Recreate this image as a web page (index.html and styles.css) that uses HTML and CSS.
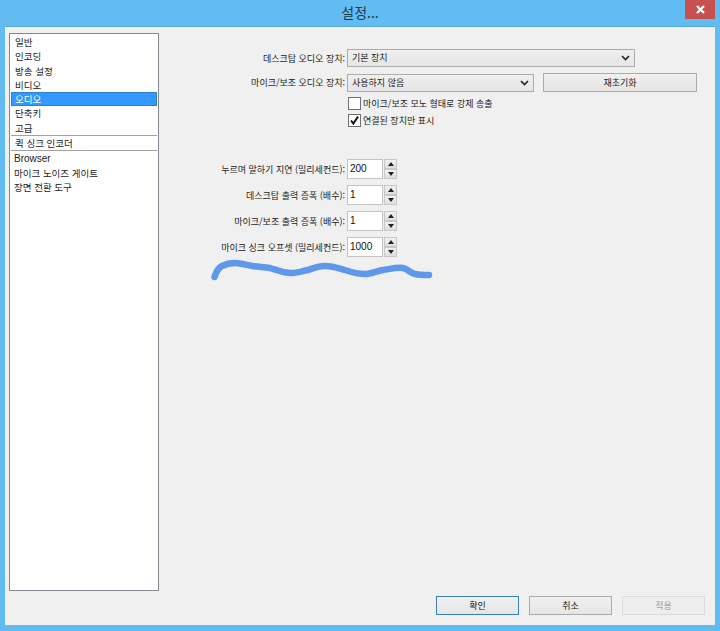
FILE: index.html
```html
<!DOCTYPE html>
<html lang="ko">
<head>
<meta charset="utf-8">
<title>설정...</title>
<link rel="stylesheet" href="styles.css">
</head>
<body>
<div class="window">
  <header class="titlebar">
    <span class="title">설정...</span>
    <span class="close"><svg width="9" height="9" viewBox="0 0 9 9"><path d="M1 1l7 7M8 1l-7 7" stroke="#fff" stroke-width="2.2" fill="none"/></svg></span>
  </header>
  <div class="client">
    <nav class="list">
      <div class="item">일반</div>
      <div class="item">인코딩</div>
      <div class="item">방송 설정</div>
      <div class="item">비디오</div>
      <div class="item selected">오디오</div>
      <div class="item">단축키</div>
      <div class="item">고급</div>
      <div class="item divided">퀵 싱크 인코더</div>
      <div class="item plugin first">Browser</div>
      <div class="item plugin">마이크 노이즈 게이트</div>
      <div class="item plugin">장면 전환 도구</div>
    </nav>
    <div class="pane">
      <section class="devices">
        <label class="label">데스크탑 오디오 장치:</label>
        <div class="select wide"><span>기본 장치</span><svg class="chev" width="9" height="6" viewBox="0 0 9 6"><path d="M1 1l3.5 3.5L8 1" stroke="#222" stroke-width="1.6" fill="none"/></svg></div>
        <label class="label">마이크/보조 오디오 장치:</label>
        <div class="inline">
          <div class="select narrow"><span>사용하지 않음</span><svg class="chev" width="9" height="6" viewBox="0 0 9 6"><path d="M1 1l3.5 3.5L8 1" stroke="#222" stroke-width="1.6" fill="none"/></svg></div>
          <div class="button reset">재초기화</div>
        </div>
        <span></span>
        <div class="checks">
          <div class="check"><span class="box"></span>마이크/보조 모노 형태로 강제 송출</div>
          <div class="check"><span class="box"><svg width="11" height="11" viewBox="0 0 11 11"><path d="M2 5.5l2.4 3L9 1.5" stroke="#111" stroke-width="2" fill="none"/></svg></span>연결된 장치만 표시</div>
        </div>
      </section>
      <section class="spins">
        <label class="label">누르며 말하기 지연 (밀리세컨드):</label>
        <div class="spin"><span class="value">200</span><span class="arrows"><i class="step"><b class="up"></b></i><i class="step"><b class="down"></b></i></span></div>
        <label class="label">데스크탑 출력 증폭 (배수):</label>
        <div class="spin"><span class="value">1</span><span class="arrows"><i class="step"><b class="up"></b></i><i class="step"><b class="down"></b></i></span></div>
        <label class="label">마이크/보조 출력 증폭 (배수):</label>
        <div class="spin"><span class="value">1</span><span class="arrows"><i class="step"><b class="up"></b></i><i class="step"><b class="down"></b></i></span></div>
        <label class="label">마이크 싱크 오프셋 (밀리세컨드):</label>
        <div class="spin"><span class="value">1000</span><span class="arrows"><i class="step"><b class="up"></b></i><i class="step"><b class="down"></b></i></span></div>
      </section>
      <footer class="actions">
        <div class="button default">확인</div>
        <div class="button">취소</div>
        <div class="button disabled">적용</div>
      </footer>
    </div>
  </div>
  <svg class="scribble" width="720" height="631" viewBox="0 0 720 631"><path d="M214.5 277C216 272 218 268 222 266C226 264 230 263 235 263C241 263 246 265 252 266C258 267 264 267 270 268C277 270 284 273 291 273C297 273 302 271 308 270C314 268 318 266 325 266C332 266 338 268 345 270C351 272 357 274 365 274C371 274 376 271 383 270C390 269 397 267 403 268C408 269 410 273 415 274C420 275 425 275 429 275" fill="none" stroke="#5f98ea" stroke-width="6.5" stroke-linecap="round" stroke-linejoin="round"/></svg>
</div>
</body>
</html>
```
FILE: styles.css
```css
* { box-sizing: border-box; }
html, body { margin: 0; padding: 0; }
body {
  width: 720px;
  height: 631px;
  overflow: hidden;
  font-family: "Noto Sans CJK KR", "Liberation Sans", sans-serif;
  font-size: 9px;
  color: #222;
}
.window {
  position: relative;
  width: 720px;
  height: 631px;
  background: #63bcf1;
  display: flex;
  flex-direction: column;
  padding: 0 5px 6px;
}
.titlebar {
  position: relative;
  height: 27px;
  flex: none;
  display: flex;
  align-items: center;
  justify-content: center;
}
.title { font-size: 14px; color: #1c3a4e; line-height: 24px; margin-top: -3px; }
.close {
  position: absolute;
  right: 0;
  top: 0;
  width: 30px;
  height: 19px;
  background: #c75050;
  display: flex;
  align-items: center;
  justify-content: center;
}
.client {
  flex: 1;
  background: #f0f0f0;
  display: flex;
  padding: 6px 0 34px 4px;
  box-shadow: 0 -1px 0 #5aa6d6;
}
.list {
  width: 150px;
  flex: none;
  background: #fff;
  border: 1px solid #828790;
  padding: 1px;
  font-size: 9.5px;
}
.item {
  height: 14.3px;
  line-height: 14px;
  padding-left: 4px;
  color: #222;
  white-space: nowrap;
}
.selected { background: #3399ff; color: #fff; border: 1px solid #2f7fd0; padding-left: 3px; line-height: 12px; }
.divided { border-top: 1px solid #a0a0a0; border-bottom: 1px solid #a0a0a0; height: 16px; line-height: 14px; }
.plugin { padding-left: 3px; height: 14px; }
.first { font-family: "Liberation Sans", sans-serif; font-size: 10px; margin-top: 1px; }
.pane {
  flex: 1;
  position: relative;
  display: flex;
  flex-direction: column;
  padding-top: 16px;
}
.devices, .spins {
  display: grid;
  grid-template-columns: 188px auto;
  justify-content: start;
  align-items: center;
}
.devices { row-gap: 6px; }
.label { text-align: right; padding-right: 2px; white-space: nowrap; }
.select {
  height: 18px;
  border: 1px solid #acacac;
  background: linear-gradient(#f0f0f0, #e5e5e5);
  display: flex;
  align-items: center;
  justify-content: space-between;
  padding: 0 4px 0 4px;
  line-height: 14px;
}
.wide { width: 288px; }
.narrow { width: 187px; }
.inline { display: flex; gap: 9px; align-items: center; width: 350px; }
.button {
  height: 19px;
  width: 89px;
  border: 1px solid #acacac;
  background: linear-gradient(#f0f0f0, #e5e5e5);
  display: flex;
  align-items: center;
  justify-content: center;
  color: #222;
}
.reset { width: 154px; }
.checks { display: flex; flex-direction: column; gap: 4px; margin-top: -1px; }
.check { display: flex; align-items: center; gap: 2px; height: 13px; white-space: nowrap; }
.box {
  width: 13px;
  height: 13px;
  background: #fff;
  border: 1px solid #707070;
  display: flex;
  align-items: center;
  justify-content: center;
  flex: none;
  margin-left: 1px;
}
.spins { margin-top: 32px; row-gap: 6px; }
.spin {
  width: 50px;
  height: 20px;
  display: flex;
  gap: 1px;
  background: #f0f0f0;
}
.value {
  width: 36px;
  background: #fff;
  padding-left: 2px;
  line-height: 17px;
  font-family: "Liberation Sans", sans-serif;
  font-size: 10px;
  border: 1px solid #c4c4c4;
  color: #111;
}
.arrows { flex: 1; display: flex; flex-direction: column; }
.step {
  flex: 1;
  display: flex;
  align-items: center;
  justify-content: center;
  background: linear-gradient(#f2f2f2, #dedede);
  border: 1px solid #c8c8c8;
}
.up, .down { display: block; width: 0; height: 0; border-left: 3.5px solid transparent; border-right: 3.5px solid transparent; }
.up { border-bottom: 4px solid #222; }
.down { border-top: 4px solid #222; }
.actions {
  margin-top: auto;
  display: flex;
  justify-content: flex-end;
  gap: 10px;
  padding-right: 10px;
  margin-bottom: -24px;
}
.actions .button { width: 83px; }
.default { border: 1px solid #3c7fb1; background: linear-gradient(#f0f0f0, #e5e5e5); }
.disabled { border-color: #dcdcdc; background: #eeeeee; color: #999; }
.scribble { position: absolute; left: 0; top: 0; pointer-events: none; }
```
